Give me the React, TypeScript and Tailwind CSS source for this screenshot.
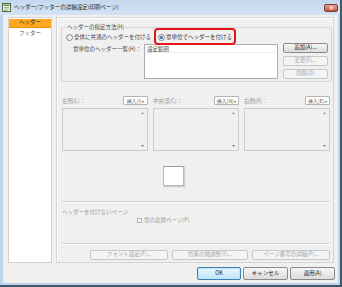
import React from "react";

function Radio({ checked }: { checked?: boolean }) {
  return (
    <span className="w-[7px] h-[7px] shrink-0 rounded-full border border-[#8a8a8a] bg-linear-to-br from-[#dcdcdc] to-white flex items-center justify-center">
      {checked && <span className="w-[3px] h-[3px] rounded-full bg-[#2b6cc4]" />}
    </span>
  );
}

function Btn({
  children,
  className,
  disabled,
  primary,
}: {
  children: React.ReactNode;
  className?: string;
  disabled?: boolean;
  primary?: boolean;
}) {
  const base =
    "flex items-center justify-center rounded-[2px] border leading-none text-[5.5px] ";
  const look = disabled
    ? "border-[#c4c8cb] bg-[#f4f4f4] text-[#a6a6a6]"
    : primary
    ? "border-[#3c7fb1] bg-linear-to-b from-[#eaf6fd] to-[#bee6fd] text-[#222] shadow-[inset_0_0_0_1px_#bfe4f9]"
    : "border-[#8a8a8a] bg-linear-to-b from-[#f6f6f6] to-[#dcdcdc] text-[#222]";
  return <div className={base + look + " " + (className || "")}>{children}</div>;
}

function Insert({ label }: { label: string }) {
  return (
    <div className="w-[25px] h-[9px] flex items-center justify-center border border-[#b4b4b4] rounded-[1px] bg-white text-[5px] text-[#666] leading-none">
      {label}
      <span className="text-[4px] ml-[0.5px]">▾</span>
    </div>
  );
}

function Area() {
  return (
    <div className="flex-1 h-[43px] border border-[#cdcdcd] bg-[#f0f0f0] flex justify-end pr-[3px] py-[3px]">
      <div className="flex flex-col justify-between">
        <svg width="3" height="2" viewBox="0 0 3 2">
          <path d="M0 2 L1.5 0 L3 2 Z" fill="#9a9a9a" />
        </svg>
        <svg width="3" height="2" viewBox="0 0 3 2">
          <path d="M0 0 L1.5 2 L3 0 Z" fill="#7a7a7a" />
        </svg>
      </div>
    </div>
  );
}

export default function App() {
  return (
    <div className="w-[342px] h-[287px] bg-[#3d596b] overflow-hidden font-['Noto_Sans_CJK_JP','Noto_Sans',sans-serif] text-[#333]">
      <div className="w-[340px] h-[285px] bg-[#bfd5ec] flex flex-col">
        {/* Title bar */}
        <div className="h-[15px] shrink-0 flex items-center pl-[2px] pr-[2px] bg-linear-to-b from-[#c4d8ee] to-[#d3e3f4]">
          <svg width="9" height="9" viewBox="0 0 9 9" className="shrink-0">
            <rect x="0.5" y="0.5" width="8" height="8" fill="#f3f6f0" stroke="#4b6b3a" />
            <rect x="1.5" y="1.5" width="6" height="1.5" fill="#5f8a47" />
            <path d="M2 4.5 H7 M2 6 H7 M2 7.5 H5" stroke="#7a8a70" strokeWidth="0.7" />
          </svg>
          <span className="ml-[3px] text-[5.5px] leading-none text-[#1e1e1e] whitespace-nowrap">
            ヘッダー/フッターの詳細設定(印刷ページ)
          </span>
          <div className="ml-auto w-[14px] h-[8px] rounded-[2px] border border-[#7e3b30] bg-linear-to-b from-[#e9a597] to-[#c2503b] flex items-center justify-center">
            <svg width="5" height="4" viewBox="0 0 5 4">
              <path d="M0.7 0.5 L4.3 3.5 M4.3 0.5 L0.7 3.5" stroke="#fff" strokeWidth="1" />
            </svg>
          </div>
        </div>

        {/* Content */}
        <div className="flex-1 ml-[3px] mr-[2px] mb-[2px] bg-[#f0f0f0] flex flex-col">
          <div className="h-[248px] shrink-0 flex gap-[4px] pt-[2px] pl-[5px] pr-[4px]">
            {/* left list */}
            <div className="w-[44px] h-[246px] bg-white border border-[#d2d2d2] flex flex-col text-[5.5px] leading-none">
              <div className="h-[9px] mt-[1px] bg-[#ffa81f] border-b border-[#f39000] flex items-center justify-center text-[#222]">
                ヘッダー
              </div>
              <div className="h-[9px] mt-[1px] flex items-center justify-center text-[#555]">
                フッター
              </div>
            </div>

            {/* right panel */}
            <div className="w-[278px] h-[246px] border border-[#d5d5d5] shadow-[inset_1px_1px_0_#fff] flex flex-col pl-[4px] pr-[1px] text-[5.5px] leading-[8px]">
              {/* group box */}
              <div className="relative mt-[9px] h-[55px] border border-[#d5d5d5] rounded-[2px] flex flex-col pl-[4px] pr-[2px]">
                <span className="absolute -top-[5px] left-[4px] px-[1px] bg-[#f0f0f0] text-[#444]">
                  ヘッダーの指定方法(H)
                </span>
                <div className="mt-[5px] h-[8px] flex items-center">
                  <div className="flex items-center gap-[1px] text-[#444]">
                    <Radio />
                    <span>全体に共通のヘッダーを付ける</span>
                  </div>
                  <div className="relative ml-[7px] flex items-center gap-[1px] text-[#333]">
                    <Radio checked />
                    <span>章単位でヘッダーを付ける</span>
                    <div className="absolute -top-[5px] -bottom-[4px] -left-[4px] -right-[4px] border-2 border-[#e8141c] rounded-[4px]" />
                  </div>
                </div>
                <div className="mt-[3px] flex">
                  <span className="ml-[7px] mt-[1px] w-[71px] text-[#444] whitespace-nowrap">
                    章単位のヘッダー一覧(H)：
                  </span>
                  <div className="w-[134px] h-[35px] bg-white border border-[#a9acb2]">
                    <div className="pl-[2px] h-[8px] text-[#444] border-b border-[#eeeeee]">
                      設定範囲
                    </div>
                  </div>
                  <div className="ml-[5px] flex flex-col gap-[3px] -mt-[1px]">
                    <Btn className="w-[45px] h-[10px]">追加(A)...</Btn>
                    <Btn className="w-[45px] h-[10px]" disabled>
                      変更(E)...
                    </Btn>
                    <Btn className="w-[45px] h-[10px]" disabled>
                      削除(D)
                    </Btn>
                  </div>
                </div>
              </div>

              {/* lower section */}
              <div className="flex flex-col pl-[1px] pr-[2px]">
                <div className="mt-[14px] flex gap-[5px]">
                  {[
                    ["左側(L)：", "挿入(I)"],
                    ["中央部(C)：", "挿入(N)"],
                    ["右側(R)：", "挿入(E)"],
                  ].map(([l, b]) => (
                    <div key={l} className="flex-1 flex items-center justify-between">
                      <span className="text-[#9a9a9a]">{l}</span>
                      <Insert label={b} />
                    </div>
                  ))}
                </div>
                <div className="mt-[3px] flex gap-[5px]">
                  <Area />
                  <Area />
                  <Area />
                </div>
                <div className="mt-[15px] ml-[101px] w-[21px] h-[20px] bg-white border border-[#b8b8b8] border-t-[#9a9a9a] border-t-dashed shadow-[1px_1px_1px_rgba(0,0,0,0.15)]" />
                <div className="mt-[15px] h-[2px] border-t border-[#d0d0d0] border-b border-b-white" />
                <div className="mt-[5px] text-[#9a9a9a]">ヘッダーを付けないページ</div>
                <div className="ml-[75px] flex items-center gap-[2px] text-[#9a9a9a]">
                  <span className="w-[5px] h-[5px] border border-[#b5b5b5] bg-[#f6f6f6]" />
                  <span>章の表題ページ(P)</span>
                </div>
                <div className="mt-[19px] h-[2px] border-t border-[#d0d0d0] border-b border-b-white" />
                <div className="mt-[5px] flex justify-end gap-[4px]">
                  <Btn className="w-[78px] h-[10px]" disabled>
                    フォント設定(F)...
                  </Btn>
                  <Btn className="w-[76px] h-[10px]" disabled>
                    位置の微調整(Y)...
                  </Btn>
                  <Btn className="w-[78px] h-[10px]" disabled>
                    ページ番号の詳細(P)...
                  </Btn>
                </div>
              </div>
            </div>
          </div>

          {/* bottom buttons */}
          <div className="mt-[4px] flex justify-end gap-[2px] pr-[3px]">
            <Btn className="w-[44px] h-[13px]" primary>
              OK
            </Btn>
            <Btn className="w-[45px] h-[13px]">キャンセル</Btn>
            <Btn className="w-[45px] h-[13px]">適用(A)</Btn>
          </div>
        </div>
      </div>
    </div>
  );
}
